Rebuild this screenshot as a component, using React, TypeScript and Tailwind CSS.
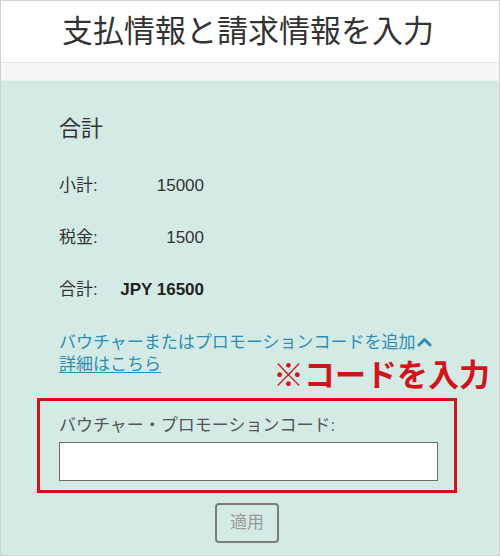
import React, { useState } from 'react';

const font = '"Liberation Sans", "Noto Sans CJK JP", sans-serif';

// rows of the order summary
const summaryRows = [
  { label: '小計:', value: '15000', bold: false },
  { label: '税金:', value: '1500', bold: false },
  { label: '合計:', value: 'JPY 16500', bold: true },
];

const App: React.FC = () => {
  const [code, setCode] = useState('');

  return (
    <div
      className="relative w-[500px] h-[556px] overflow-hidden border border-[#d2d2d2] bg-[#d4ebe5] text-[#333]"
      style={{ fontFamily: font }}
    >
      {/* header */}
      <div className="h-[62px] bg-white border-b border-[#e4e4e4] flex items-center pl-[61px]">
        <h1 className="text-[31px] leading-none text-[#333] font-normal tracking-normal">支払情報と請求情報を入力</h1>
      </div>
      <div className="h-[18px] bg-[#f8f8f8] border-b border-[#e9f3f0]" />

      <div className="pl-[58px] pt-[34px]">
        <h2 className="text-[22px] leading-[28px] font-normal text-[#333]">合計</h2>

        <div className="mt-[17px] flex flex-col text-[17px]">
          {summaryRows.map((row) => (
            <div key={row.label} className="h-[52px] flex items-center">
              <div className="w-[61px] text-[#333]">{row.label}</div>
              <div className={`w-[84px] text-right ${row.bold ? 'font-bold text-[#222]' : 'text-[#333]'}`}>{row.value}</div>
            </div>
          ))}
        </div>

        <div className="mt-[16px] text-[17px] leading-[22px] text-[#2f8db3]">
          <div className="flex items-center">
            <span>バウチャーまたはプロモーションコードを追加</span>
            <svg width="15" height="12" viewBox="0 0 15 12" className="ml-[1px] -mt-[3px]">
              <path d="M2 9 L7.5 3.5 L13 9" fill="none" stroke="#2f8db3" strokeWidth="3" strokeLinecap="round" strokeLinejoin="round" />
            </svg>
          </div>
          <a href="#" className="underline underline-offset-2">詳細はこちら</a>
        </div>
      </div>

      {/* annotation */}
      <div className="absolute left-[272px] top-[357px] text-[31px] leading-[36px] font-bold text-[#d3121c]">※コードを入力</div>

      <div className="pl-[36px] mt-[22px] w-[456px]">
        <div className="border-[3px] border-[#d3121c] pl-[19px] pr-[16px] pt-[14px] pb-[9px]">
          <label className="block text-[17px] leading-[22px] text-[#555]">バウチャー・プロモーションコード:</label>
          <input
            value={code}
            onChange={(e) => setCode(e.target.value)}
            className="mt-[5px] block w-[379px] h-[39px] bg-white border-[1.5px] border-[#6d6d6d] outline-none px-2"
          />
        </div>
        <div className="mt-[10px] flex justify-center">
          <button className="w-[64px] h-[40px] border-2 border-[#7b7d7c] rounded-[4px] text-[17px] text-[#9a9a9a] bg-transparent">
            適用
          </button>
        </div>
      </div>
    </div>
  );
};

export default App;
